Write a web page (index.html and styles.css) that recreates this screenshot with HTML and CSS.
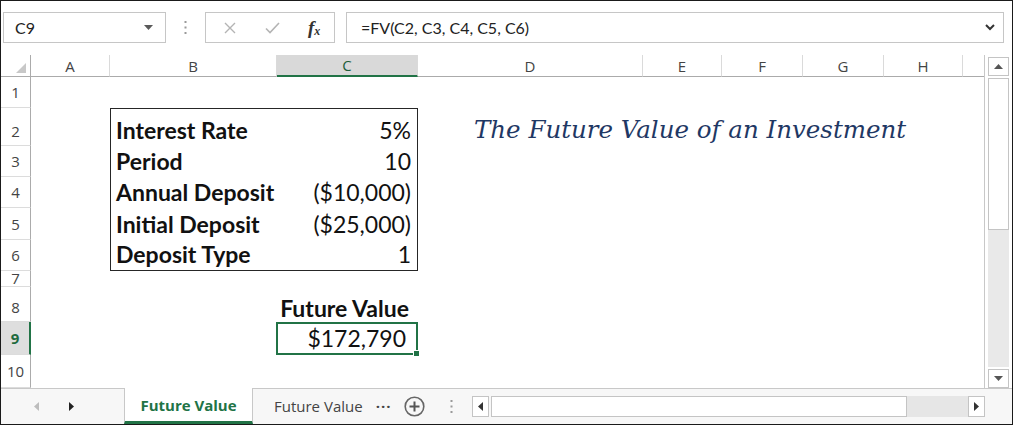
FILE: index.html
```html
<!DOCTYPE html>
<html lang="en">
<head>
    <meta charset="UTF-8">
    <title>Future Value - Excel</title>
    <link rel="stylesheet" href="styles.css">
</head>
<body>
    <div class="app">
        <div class="formula-bar">
            <div class="name-box">
                <span>C9</span>
                <svg class="caret" width="9" height="5" viewBox="0 0 9 5"><path d="M0 0 H9 L4.5 5 Z" fill="#5a5a5a"/></svg>
            </div>
            <div class="grip">
                <svg width="3" height="13" viewBox="0 0 3 13"><rect x="0.5" y="0" width="2" height="2" fill="#9a9a9a"/><rect x="0.5" y="5.5" width="2" height="2" fill="#9a9a9a"/><rect x="0.5" y="11" width="2" height="2" fill="#9a9a9a"/></svg>
            </div>
            <div class="fx-box">
                <svg class="fx-icon" width="12" height="12" viewBox="0 0 12 12"><path d="M1 1 L11 11 M11 1 L1 11" stroke="#b4b4b4" stroke-width="1.4" fill="none"/></svg>
                <svg class="fx-icon" width="15" height="12" viewBox="0 0 15 12"><path d="M1 6.5 L5 10.5 L14 1" stroke="#b4b4b4" stroke-width="1.6" fill="none"/></svg>
                <span class="fx">f<sub>x</sub></span>
            </div>
            <div class="formula">
                <span>=FV(C2, C3, C4, C5, C6)</span>
                <svg class="chevron" width="10" height="7" viewBox="0 0 10 7"><path d="M1 1 L5 5 L9 1" stroke="#333" stroke-width="2" fill="none"/></svg>
            </div>
        </div>

        <div class="workspace">
            <div class="sheet">
                <div class="row head">
                    <div class="corner"><svg width="10" height="10" viewBox="0 0 10 10"><path d="M10 0 V10 H0 Z" fill="#c8c8c8"/></svg></div>
                    <div class="ch">A</div>
                    <div class="ch">B</div>
                    <div class="ch selected">C</div>
                    <div class="ch">D</div>
                    <div class="ch">E</div>
                    <div class="ch">F</div>
                    <div class="ch">G</div>
                    <div class="ch">H</div>
                    <div class="ch last"></div>
                </div>
                <div class="row h31"><div class="rh">1</div></div>
                <div class="row h38">
                    <div class="rh">2</div>
                    <div class="cell col-b label box-l box-t">Interest Rate</div>
                    <div class="cell col-c num box-r box-t">5%</div>
                    <div class="cell col-d title">The Future Value of an Investment</div>
                </div>
                <div class="row h31">
                    <div class="rh">3</div>
                    <div class="cell col-b label box-l">Period</div>
                    <div class="cell col-c num box-r">10</div>
                </div>
                <div class="row h31">
                    <div class="rh">4</div>
                    <div class="cell col-b label box-l">Annual Deposit</div>
                    <div class="cell col-c num box-r">($10,000)</div>
                </div>
                <div class="row h32">
                    <div class="rh">5</div>
                    <div class="cell col-b label box-l">Initial Deposit</div>
                    <div class="cell col-c num box-r">($25,000)</div>
                </div>
                <div class="row h31">
                    <div class="rh">6</div>
                    <div class="cell col-b label box-l box-b">Deposit Type</div>
                    <div class="cell col-c num box-r box-b">1</div>
                </div>
                <div class="row h16"><div class="rh small">7</div></div>
                <div class="row h35">
                    <div class="rh">8</div>
                    <div class="cell col-c num bold fv-label">Future Value</div>
                </div>
                <div class="row h33">
                    <div class="rh active">9</div>
                    <div class="cell col-c num active-cell">$172,790<span class="fill-handle"></span></div>
                </div>
                <div class="row h33"><div class="rh">10</div></div>
            </div>

            <div class="vscroll">
                <div class="sb-btn"><svg width="9" height="5" viewBox="0 0 9 5"><path d="M0 5 H9 L4.5 0 Z" fill="#555"/></svg></div>
                <div class="v-thumb"></div>
                <div class="v-track"></div>
                <div class="sb-btn"><svg width="9" height="5" viewBox="0 0 9 5"><path d="M0 0 H9 L4.5 5 Z" fill="#555"/></svg></div>
            </div>
        </div>

        <div class="tab-bar">
            <div class="tab-nav">
                <svg width="5" height="9" viewBox="0 0 5 9"><path d="M5 0 V9 L0 4.5 Z" fill="#bdbdbd"/></svg>
                <svg width="5" height="9" viewBox="0 0 5 9"><path d="M0 0 V9 L5 4.5 Z" fill="#222"/></svg>
            </div>
            <div class="tab active">Future Value</div>
            <div class="tab">Future Value <span class="more">&middot;&middot;&middot;</span></div>
            <div class="add-sheet">
                <svg width="21" height="21" viewBox="0 0 21 21"><circle cx="10.5" cy="10.5" r="9.3" stroke="#666" stroke-width="1.6" fill="none"/><path d="M10.5 5.5 V15.5 M5.5 10.5 H15.5" stroke="#555" stroke-width="2"/></svg>
            </div>
            <div class="grip tab-grip">
                <svg width="3" height="13" viewBox="0 0 3 13"><rect x="0.5" y="0" width="2" height="2" fill="#9a9a9a"/><rect x="0.5" y="5.5" width="2" height="2" fill="#9a9a9a"/><rect x="0.5" y="11" width="2" height="2" fill="#9a9a9a"/></svg>
            </div>
            <div class="hscroll">
                <div class="sb-btn h"><svg width="5" height="9" viewBox="0 0 5 9"><path d="M5 0 V9 L0 4.5 Z" fill="#333"/></svg></div>
                <div class="h-thumb"></div>
                <div class="h-track"></div>
                <div class="sb-btn h"><svg width="5" height="9" viewBox="0 0 5 9"><path d="M0 0 V9 L5 4.5 Z" fill="#333"/></svg></div>
            </div>
        </div>
    </div>
</body>
</html>
```

FILE: styles.css
```css
* {
    box-sizing: border-box;
}
body {
    margin: 0;
    background: #fff;
    font-family: 'Open Sans', 'Noto Sans', sans-serif;
}
.app {
    width: 1013px;
    height: 425px;
    border: 1px solid #1a1a1a;
    display: flex;
    flex-direction: column;
    overflow: hidden;
    background: #fff;
}

/* formula bar */
.formula-bar {
    height: 54px;
    flex: none;
    display: flex;
    align-items: flex-start;
    padding: 11px 8px 0 2px;
}
.name-box {
    width: 163px;
    height: 31px;
    border: 1px solid #c6c6c6;
    display: flex;
    align-items: center;
    justify-content: space-between;
    padding: 0 12px 0 11px;
    font-family: 'Lato', sans-serif;
    font-size: 16px;
    color: #222;
}
.grip {
    width: 39px;
    height: 31px;
    display: flex;
    align-items: center;
    justify-content: center;
}
.fx-box {
    width: 130px;
    height: 31px;
    border: 1px solid #c6c6c6;
    display: flex;
    align-items: center;
    padding-left: 18px;
}
.fx-icon {
    margin-right: 29px;
}
.fx-box .fx-icon + .fx-icon {
    margin-right: 28px;
}
.fx {
    font-family: 'Liberation Serif', serif;
    font-style: italic;
    font-weight: bold;
    font-size: 19px;
    color: #333;
}
.fx sub {
    font-size: 12px;
    vertical-align: -1px;
}
.formula {
    flex: 1;
    margin-left: 11px;
    height: 31px;
    border: 1px solid #c6c6c6;
    display: flex;
    align-items: center;
    justify-content: space-between;
    padding: 0 8px 0 14px;
    font-family: 'Lato', sans-serif;
    font-size: 16px;
    color: #222;
}

/* grid */
.workspace {
    flex: 1;
    display: flex;
    min-height: 0;
}
.sheet {
    width: 984px;
    border-right: 1px solid #c8c8c8;
}
.row {
    display: grid;
    grid-template-columns: 30px 79px 167px 141px 225px 79px 81px 81px 79px 1fr;
}
.row.head {
    height: 22px;
}
.h16 { height: 16px; }
.h31 { height: 31px; }
.h32 { height: 32px; }
.h33 { height: 33px; }
.h35 { height: 35px; }
.h38 { height: 38px; }

.corner {
    border-right: 1px solid #ababab;
    border-bottom: 1px solid #ababab;
    display: flex;
    align-items: flex-end;
    justify-content: flex-end;
    padding: 0 4px 3px 0;
}
.ch {
    border-right: 1px solid #dadada;
    border-bottom: 1px solid #ababab;
    display: flex;
    align-items: center;
    justify-content: center;
    font-size: 15px;
    color: #444;
}
.ch.last {
    border-right: none;
}
.ch.selected {
    background: #d9d9d9;
    border-bottom: 2px solid #217346;
    color: #1e5e3a;
}
.rh {
    grid-column: 1;
    border-right: 1px solid #ababab;
    border-bottom: 1px solid #dcdcdc;
    display: flex;
    align-items: center;
    justify-content: center;
    font-size: 15px;
    color: #444;
}
.h38 .rh, .h35 .rh {
    align-items: flex-end;
    padding-bottom: 4px;
}
.rh.small {
    align-items: flex-end;
    padding-bottom: 0;
    line-height: 15px;
}
.rh.active {
    background: #dedede;
    border-right: 2px solid #217346;
    color: #1e6b3e;
    font-weight: bold;
}

.cell {
    display: flex;
    align-items: flex-end;
    padding-bottom: 2px;
    font-family: 'Lato', sans-serif;
    font-size: 23px;
    line-height: 27px;
    color: #111;
    white-space: nowrap;
}
.col-b { grid-column: 3; }
.col-c { grid-column: 4; }
.col-d { grid-column: 5; }
.label {
    font-weight: bold;
    padding-left: 5px;
}
.num {
    justify-content: flex-end;
    padding-right: 6px;
}
.bold {
    font-weight: bold;
}
.fv-label {
    padding-right: 9px;
    padding-bottom: 0;
}
.box-l { border-left: 1px solid #262626; }
.box-r { border-right: 1px solid #262626; }
.box-t { border-top: 1px solid #262626; }
.box-b { border-bottom: 1px solid #262626; }
.title {
    padding-left: 56px;
    padding-bottom: 3px;
    font-family: 'DejaVu Serif', serif;
    font-style: italic;
    font-size: 24.5px;
    color: #1f3864;
    overflow: visible;
}
.active-cell {
    position: relative;
    border: 2px solid #217346;
    margin-left: -1px;
    padding-right: 10px;
    padding-bottom: 1px;
}
.fill-handle {
    position: absolute;
    right: -4px;
    bottom: -4px;
    width: 7px;
    height: 7px;
    background: #217346;
    border: 1px solid #fff;
}

/* vertical scrollbar */
.vscroll {
    flex: 1;
    display: flex;
    flex-direction: column;
    padding: 2px 3px 0 3px;
    background: #fff;
}
.sb-btn {
    height: 19px;
    border: 1px solid #c4c4c4;
    background: #fff;
    display: flex;
    align-items: center;
    justify-content: center;
    flex: none;
}
.v-thumb {
    height: 152px;
    margin-top: 2px;
    border: 1px solid #c4c4c4;
    background: #fff;
}
.v-track {
    flex: 1;
    background: #e9e9e9;
    margin-bottom: 2px;
}

/* sheet tabs */
.tab-bar {
    height: 36px;
    flex: none;
    display: flex;
    align-items: stretch;
    border-top: 1px solid #c8c8c8;
    background: #f7f7f7;
    font-size: 15px;
}
.tab-nav {
    width: 123px;
    display: flex;
    align-items: center;
    gap: 30px;
    padding-left: 33px;
}
.tab {
    display: flex;
    align-items: center;
    padding: 0 0 2px 21px;
    color: #444;
    width: 151px;
}
.tab.active {
    width: 129px;
    justify-content: center;
    padding: 0;
    background: #fff;
    border-left: 1px solid #c8c8c8;
    border-right: 1px solid #c8c8c8;
    border-bottom: 3px solid #217346;
    margin-top: -1px;
    font-weight: bold;
    color: #217346;
}
.more {
    margin-left: 13px;
    font-weight: bold;
    letter-spacing: 1px;
}
.add-sheet {
    display: flex;
    align-items: center;
    width: 26px;
}
.tab-grip {
    width: 42px;
    height: auto;
}
.hscroll {
    display: flex;
    align-items: center;
    width: 513px;
    padding-bottom: 1px;
}
.sb-btn.h {
    width: 17px;
    height: 21px;
}
.h-thumb {
    width: 416px;
    height: 21px;
    margin-left: 2px;
    border: 1px solid #c4c4c4;
    background: #fff;
}
.h-track {
    flex: 1;
    height: 21px;
    background: #e6e6e6;
}
```
